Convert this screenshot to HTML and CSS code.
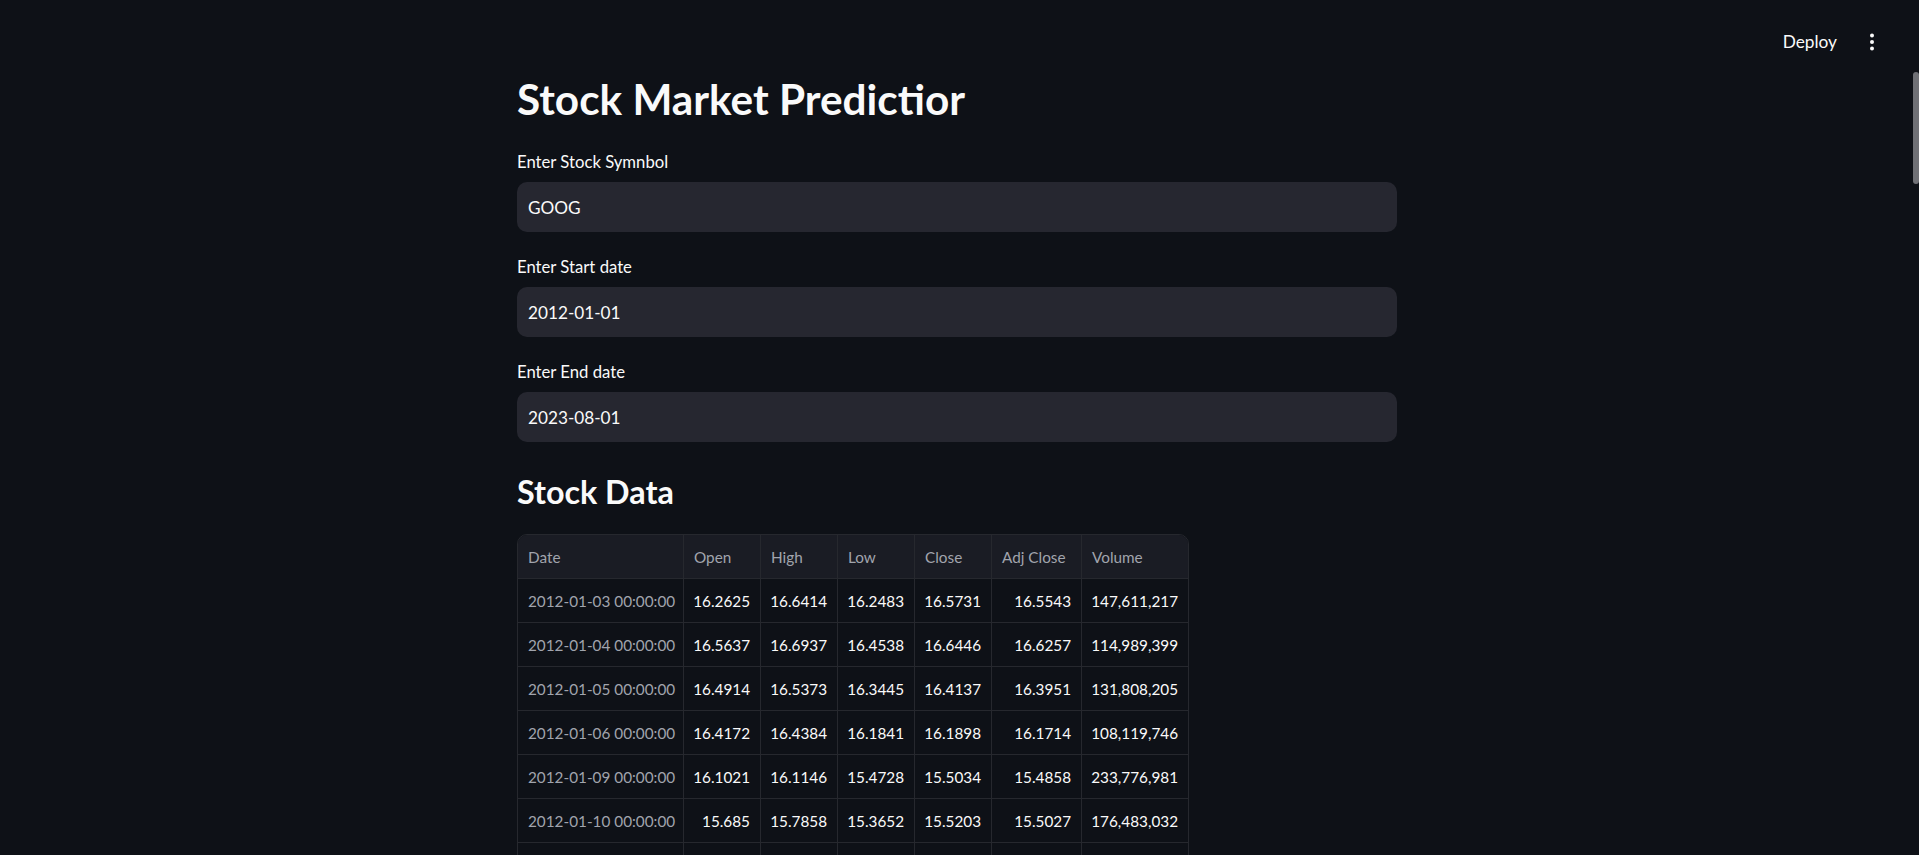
FILE: index.html
```html
<!DOCTYPE html>
<html lang="en">
<head>
<meta charset="utf-8">
<title>Stock Market Prediction</title>
<link rel="stylesheet" href="styles.css">
</head>
<body>
<div class="app">
  <header class="topbar">
    <span class="deploy">Deploy</span>
    <span class="kebab">
      <svg viewBox="0 0 20 20" width="20" height="20" aria-hidden="true">
        <circle cx="10" cy="3.6" r="2" fill="#fafafa"/>
        <circle cx="10" cy="10" r="2" fill="#fafafa"/>
        <circle cx="10" cy="16.4" r="2" fill="#fafafa"/>
      </svg>
    </span>
  </header>
  <main class="main">
    <h1 class="title">Stock Market Predictior</h1>
    <div class="form">
      <div class="field">
        <label class="label">Enter Stock Symnbol</label>
        <div class="input">GOOG</div>
      </div>
      <div class="field">
        <label class="label">Enter Start date</label>
        <div class="input">2012-01-01</div>
      </div>
      <div class="field">
        <label class="label">Enter End date</label>
        <div class="input">2023-08-01</div>
      </div>
    </div>
    <h3 class="subheader">Stock Data</h3>
    <div class="grid">
      <div class="row head">
        <div class="cell">Date</div>
        <div class="cell">Open</div>
        <div class="cell">High</div>
        <div class="cell">Low</div>
        <div class="cell">Close</div>
        <div class="cell">Adj Close</div>
        <div class="cell">Volume</div>
      </div>
      <div class="row">
        <div class="cell idx">2012-01-03 00:00:00</div>
        <div class="cell num">16.2625</div>
        <div class="cell num">16.6414</div>
        <div class="cell num">16.2483</div>
        <div class="cell num">16.5731</div>
        <div class="cell num">16.5543</div>
        <div class="cell num">147,611,217</div>
      </div>
      <div class="row">
        <div class="cell idx">2012-01-04 00:00:00</div>
        <div class="cell num">16.5637</div>
        <div class="cell num">16.6937</div>
        <div class="cell num">16.4538</div>
        <div class="cell num">16.6446</div>
        <div class="cell num">16.6257</div>
        <div class="cell num">114,989,399</div>
      </div>
      <div class="row">
        <div class="cell idx">2012-01-05 00:00:00</div>
        <div class="cell num">16.4914</div>
        <div class="cell num">16.5373</div>
        <div class="cell num">16.3445</div>
        <div class="cell num">16.4137</div>
        <div class="cell num">16.3951</div>
        <div class="cell num">131,808,205</div>
      </div>
      <div class="row">
        <div class="cell idx">2012-01-06 00:00:00</div>
        <div class="cell num">16.4172</div>
        <div class="cell num">16.4384</div>
        <div class="cell num">16.1841</div>
        <div class="cell num">16.1898</div>
        <div class="cell num">16.1714</div>
        <div class="cell num">108,119,746</div>
      </div>
      <div class="row">
        <div class="cell idx">2012-01-09 00:00:00</div>
        <div class="cell num">16.1021</div>
        <div class="cell num">16.1146</div>
        <div class="cell num">15.4728</div>
        <div class="cell num">15.5034</div>
        <div class="cell num">15.4858</div>
        <div class="cell num">233,776,981</div>
      </div>
      <div class="row">
        <div class="cell idx">2012-01-10 00:00:00</div>
        <div class="cell num">15.685</div>
        <div class="cell num">15.7858</div>
        <div class="cell num">15.3652</div>
        <div class="cell num">15.5203</div>
        <div class="cell num">15.5027</div>
        <div class="cell num">176,483,032</div>
      </div>
      <div class="row">
        <div class="cell idx"></div>
        <div class="cell num"></div>
        <div class="cell num"></div>
        <div class="cell num"></div>
        <div class="cell num"></div>
        <div class="cell num"></div>
        <div class="cell num"></div>
      </div>
    </div>
  </main>
  <div class="scroll-thumb"></div>
</div>
</body>
</html>
```

FILE: styles.css
```css
html, body {
  margin: 0;
  height: 100%;
  overflow: hidden;
  background: #0e1117;
}

body {
  font-family: Lato, "Noto Sans", sans-serif;
  color: #fafafa;
}

.app {
  padding-right: 5px;
  height: 100%;
  box-sizing: border-box;
}

.topbar {
  height: 74px;
  box-sizing: border-box;
  padding-top: 32px;
  padding-right: 32px;
  display: flex;
  justify-content: flex-end;
  align-items: flex-start;
  gap: 25px;
}

.deploy {
  font-size: 17.3px;
  line-height: 20px;
}

.kebab {
  width: 20px;
  height: 20px;
  display: flex;
}

.main {
  width: 880px;
  margin: 0 auto;
}

.title {
  margin: 0;
  font-size: 42.3px;
  line-height: 50px;
  font-weight: 700;
}

.form {
  margin-top: 28px;
  display: flex;
  flex-direction: column;
  gap: 25px;
}

.field {
  display: flex;
  flex-direction: column;
  gap: 10px;
}

.label {
  font-size: 16.7px;
  line-height: 20px;
}

.input {
  height: 50px;
  box-sizing: border-box;
  border-radius: 10px;
  background: #262730;
  padding-left: 11px;
  display: flex;
  align-items: center;
  font-size: 17.2px;
}

.subheader {
  margin: 31px 0 0;
  font-size: 32.3px;
  line-height: 38px;
  font-weight: 700;
}

.grid {
  margin-top: 23px;
  width: 672px;
  box-sizing: border-box;
  border: 1px solid #26282e;
  border-radius: 10px;
  overflow: hidden;
}

.row {
  display: grid;
  grid-template-columns: 166px 77px 77px 77px 77px 90px 106px;
}

.cell {
  height: 44px;
  box-sizing: border-box;
  border-right: 1px solid #26282e;
  border-bottom: 1px solid #26282e;
  padding: 0 10px;
  display: flex;
  align-items: center;
  font-size: 15.3px;
  white-space: nowrap;
  overflow: hidden;
}

.cell:last-child {
  border-right: none;
}

.head .cell {
  background: #1a1c24;
  color: #a1a4ad;
}

.idx {
  color: #a1a4ad;
}

.num {
  justify-content: flex-end;
  color: #fafafa;
}

.scroll-thumb {
  position: fixed;
  right: 0;
  top: 72px;
  width: 6px;
  height: 112px;
  background: #707176;
  border-radius: 3px;
}
```
